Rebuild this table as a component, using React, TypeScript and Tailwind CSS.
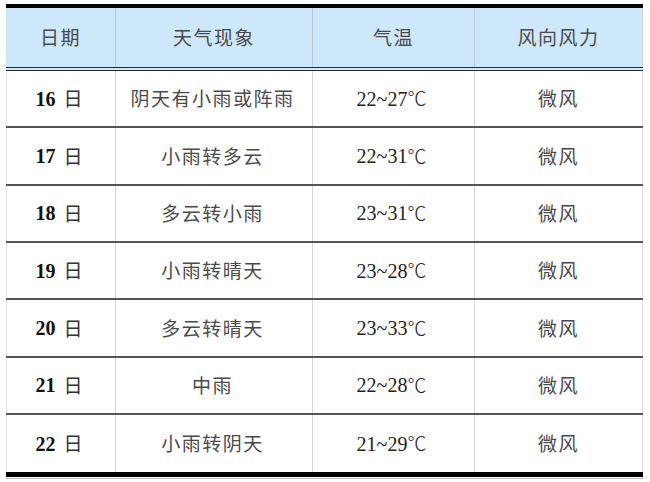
const ROWS = [
  { day: "16", weather: "阴天有小雨或阵雨", temp: "22~27", wind: "微风" },
  { day: "17", weather: "小雨转多云", temp: "22~31", wind: "微风" },
  { day: "18", weather: "多云转小雨", temp: "23~31", wind: "微风" },
  { day: "19", weather: "小雨转晴天", temp: "23~28", wind: "微风" },
  { day: "20", weather: "多云转晴天", temp: "23~33", wind: "微风" },
  { day: "21", weather: "中雨", temp: "22~28", wind: "微风" },
  { day: "22", weather: "小雨转阴天", temp: "21~29", wind: "微风" },
];

const cjk = "font-['Noto_Sans_CJK_SC',sans-serif]";
const serif = "font-['Liberation_Serif','Noto_Sans_CJK_SC',serif]";
const cols = "grid grid-cols-[109px_197px_162px_169px]";
const cell = "flex items-center justify-center";

export default function App() {
  return (
    <div className="w-[650px] h-[482px] bg-white pt-[4px]">
      <div className="ml-[6px] w-[637px] border-t-[4px] border-b-[5px] border-black">
        {/* Header */}
        <div className={`${cols} h-[63px] bg-[#cde8fa] border-b-[4px] border-double border-[#2a2a2a] text-[19px] text-[#4a4a4a] tracking-[1.5px] ${cjk}`}>
          <div className={cell}>日期</div>
          <div className={`${cell} border-l border-[#b9c9d6]`}>天气现象</div>
          <div className={`${cell} border-l border-[#b9c9d6]`}>气温</div>
          <div className={`${cell} border-l border-[#b9c9d6] border-r border-r-[#d6d6d6]`}>风向风力</div>
        </div>

        {/* Body */}
        {ROWS.map((r, i) => (
          <div
            key={r.day}
            className={`${cols} h-[57.33px] ${i < ROWS.length - 1 ? "border-b-2 border-[#555]" : ""}`}
          >
            <div className={`${cell} gap-[8px] pr-[4px] border-l border-[#e2e2e2]`}>
              <span className={`${serif} font-bold text-[20px] text-[#111]`}>{r.day}</span>
              <span className={`${cjk} text-[19px] text-[#333]`}>日</span>
            </div>
            <div className={`${cell} border-l border-[#d4d4d4] ${cjk} text-[19px] text-[#4a4a4a] tracking-[1.5px] pr-[3px]`}>
              {r.weather}
            </div>
            <div className={`${cell} border-l border-[#d4d4d4] ${serif} text-[20px] text-[#222] pr-[4px]`}>
              {r.temp}
              <span className={`${cjk} text-[19px] font-light`}>℃</span>
            </div>
            <div className={`${cell} border-l border-[#d4d4d4] border-r border-r-[#dcdcdc] ${cjk} text-[19px] text-[#4a4a4a] tracking-[1.5px]`}>
              {r.wind}
            </div>
          </div>
        ))}
      </div>
      <div className="ml-[6px] mt-[1px] w-[637px] h-px bg-[#bbb]" />
    </div>
  );
}
